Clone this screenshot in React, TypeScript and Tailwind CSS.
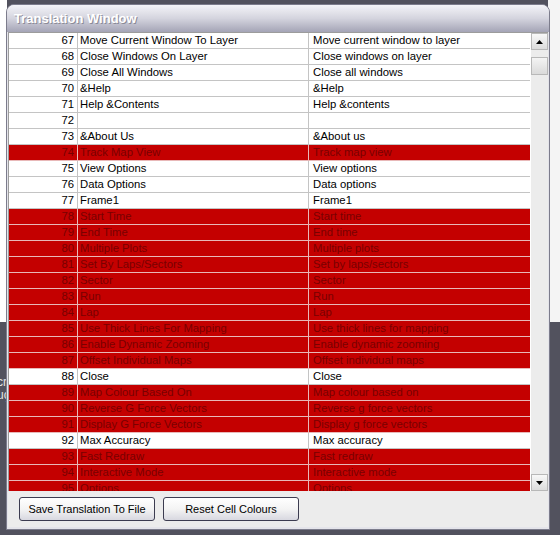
import React from 'react';

type Row = { n: number; en: string; tr: string; red?: boolean };

const ROWS: Row[] = [
  { n: 67, en: 'Move Current Window To Layer', tr: 'Move current window to layer' },
  { n: 68, en: 'Close Windows On Layer', tr: 'Close windows on layer' },
  { n: 69, en: 'Close All Windows', tr: 'Close all windows' },
  { n: 70, en: '&Help', tr: '&Help' },
  { n: 71, en: 'Help &Contents', tr: 'Help &contents' },
  { n: 72, en: '', tr: '' },
  { n: 73, en: '&About Us', tr: '&About us' },
  { n: 74, en: 'Track Map View', tr: 'Track map view', red: true },
  { n: 75, en: 'View Options', tr: 'View options' },
  { n: 76, en: 'Data Options', tr: 'Data options' },
  { n: 77, en: 'Frame1', tr: 'Frame1' },
  { n: 78, en: 'Start Time', tr: 'Start time', red: true },
  { n: 79, en: 'End Time', tr: 'End time', red: true },
  { n: 80, en: 'Multiple Plots', tr: 'Multiple plots', red: true },
  { n: 81, en: 'Set By Laps/Sectors', tr: 'Set by laps/sectors', red: true },
  { n: 82, en: 'Sector', tr: 'Sector', red: true },
  { n: 83, en: 'Run', tr: 'Run', red: true },
  { n: 84, en: 'Lap', tr: 'Lap', red: true },
  { n: 85, en: 'Use Thick Lines For Mapping', tr: 'Use thick lines for mapping', red: true },
  { n: 86, en: 'Enable Dynamic Zooming', tr: 'Enable dynamic zooming', red: true },
  { n: 87, en: 'Offset Individual Maps', tr: 'Offset individual maps', red: true },
  { n: 88, en: 'Close', tr: 'Close' },
  { n: 89, en: 'Map Colour Based On', tr: 'Map colour based on', red: true },
  { n: 90, en: 'Reverse G Force Vectors', tr: 'Reverse g force vectors', red: true },
  { n: 91, en: 'Display G Force Vectors', tr: 'Display g force vectors', red: true },
  { n: 92, en: 'Max Accuracy', tr: 'Max accuracy' },
  { n: 93, en: 'Fast Redraw', tr: 'Fast redraw', red: true },
  { n: 94, en: 'Interactive Mode', tr: 'Interactive mode', red: true },
  { n: 95, en: 'Options', tr: 'Options', red: true },
];

function GridRow({ row }: { row: Row }) {
  const bg = row.red ? 'bg-[#c40000] text-[#780000]' : 'bg-white text-black';
  const line = row.red ? 'border-[#e8b8b8]' : 'border-[#c4c4c4]';
  return (
    <div className={`flex h-[16px] shrink-0 border-b leading-[15px] ${bg} ${line}`}>
      <div className={`w-[69px] shrink-0 border-r pr-[3px] text-right ${line}`}>{row.n}</div>
      <div className={`w-[231px] shrink-0 overflow-hidden whitespace-nowrap border-r pl-[2px] ${line}`}>{row.en}</div>
      <div className="flex-1 overflow-hidden whitespace-nowrap pl-[4px]">{row.tr}</div>
    </div>
  );
}

function ScrollButton({ down }: { down?: boolean }) {
  return (
    <div className="flex h-[17px] w-[17px] shrink-0 items-center justify-center border border-[#b8b8b8] bg-gradient-to-b from-[#f8f8f8] to-[#dcdcdc]">
      <svg width="7" height="4" viewBox="0 0 7 4">
        {down ? <path d="M0 0h7L3.5 4z" fill="#000" /> : <path d="M3.5 0L7 4H0z" fill="#000" />}
      </svg>
    </div>
  );
}

function Button({ children }: { children: React.ReactNode }) {
  return (
    <button className="h-[24px] w-[136px] rounded-[3px] border border-[#3c3c50] bg-gradient-to-b from-white via-[#f4f4f4] to-[#d8d8e0] text-[11px] text-black">
      {children}
    </button>
  );
}

export default function App() {
  return (
    <div
      className="relative h-[535px] w-[560px] overflow-hidden bg-[#52525e]"
      style={{ fontFamily: '"Liberation Sans", Arial, sans-serif' }}
    >
      {/* desktop behind the window */}
      <div className="flex h-[322px] w-full">
        <div className="w-[7px] bg-white" />
        <div className="flex-1" />
        <div className="w-[12px] bg-[#f4f4f4]" />
      </div>
      <div className="absolute left-[-3px] top-[376px] text-[12px] leading-[13px] text-[#e4e4e4]">
        <div>cr</div>
        <div>uç</div>
      </div>

      {/* the window */}
      <div className="absolute left-[6px] top-[4px] flex h-[526px] w-[544px] flex-col rounded-t-[8px] border border-[#7c7c8c] bg-[#e4e4ea]">
        <div className="flex h-[27px] shrink-0 items-center rounded-t-[7px] bg-gradient-to-b from-[#f4f4f8] via-[#d4d4de] to-[#a4a4b6] pl-[7px]">
          <span className="text-[13px] font-bold text-white" style={{ textShadow: '1px 1px 0 #8a8a98' }}>
            Translation Window
          </span>
        </div>
        <div className="flex flex-1 flex-col px-[1px] pb-[2px]">
          <div className="flex h-[459px] shrink-0 border-l border-t border-[#9c9c9c] bg-white">
            <div className="flex w-[521px] flex-col overflow-hidden text-[11.3px]">
              {ROWS.map((r) => (
                <GridRow key={r.n} row={r} />
              ))}
            </div>
            <div className="ml-[1px] flex w-[17px] flex-col bg-[#ececec]">
              <ScrollButton />
              <div className="mt-[7px] h-[18px] w-[17px] border border-[#b8b8b8] bg-gradient-to-b from-[#f4f4f4] to-[#dadada]" />
              <div className="flex-1" />
              <ScrollButton down />
            </div>
          </div>
          <div className="flex flex-1 items-center gap-[8px] bg-[#ececec] pl-[11px]">
            <Button>Save Translation To File</Button>
            <Button>Reset Cell Colours</Button>
          </div>
        </div>
      </div>
    </div>
  );
}
